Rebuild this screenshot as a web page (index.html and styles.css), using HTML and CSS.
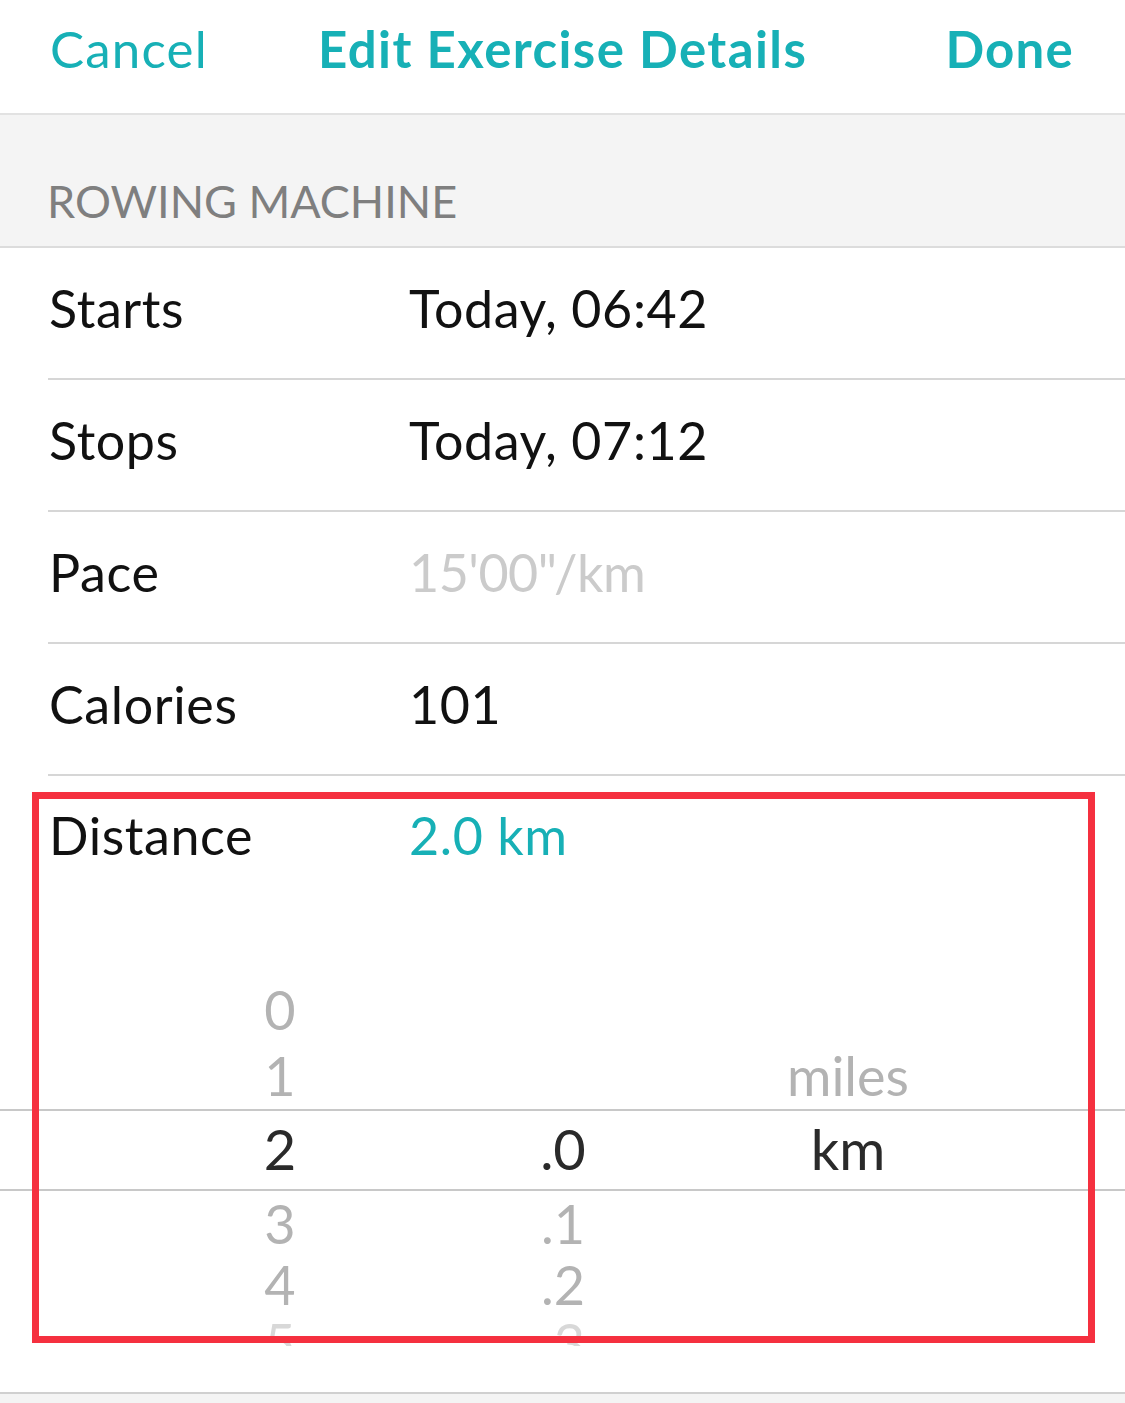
FILE: index.html
```html
<!DOCTYPE html>
<html lang="en">
<head>
  <meta charset="UTF-8">
  <meta name="viewport" content="width=device-width, initial-scale=1.0">
  <title>Edit Exercise Details</title>
  <link rel="stylesheet" href="styles.css">
</head>
<body>
  <div class="screen">
    <header class="nav">
      <span class="nav-btn">Cancel</span>
      <span class="nav-title">Edit Exercise Details</span>
      <span class="nav-btn nav-done">Done</span>
    </header>

    <div class="section-head">ROWING MACHINE</div>

    <ul class="rows">
      <li class="row"><span class="label">Starts</span><span class="value">Today, 06:42</span></li>
      <li class="row"><span class="label">Stops</span><span class="value">Today, 07:12</span></li>
      <li class="row"><span class="label">Pace</span><span class="value muted">15'00"/km</span></li>
      <li class="row"><span class="label">Calories</span><span class="value">101</span></li>
      <li class="row row-open"><span class="label">Distance</span><span class="value accent">2.0 km</span></li>
    </ul>

    <div class="picker">
      <div class="pick-row r0"><span class="cell">0</span><span class="cell"></span><span class="cell"></span></div>
      <div class="pick-row r1"><span class="cell">1</span><span class="cell"></span><span class="cell">miles</span></div>
      <div class="pick-row selected"><span class="cell">2</span><span class="cell">.0</span><span class="cell">km</span></div>
      <div class="pick-row r3"><span class="cell">3</span><span class="cell">.1</span><span class="cell"></span></div>
      <div class="pick-row r4"><span class="cell">4</span><span class="cell">.2</span><span class="cell"></span></div>
      <div class="pick-row faint"><span class="cell">5</span><span class="cell">.3</span><span class="cell"></span></div>
    </div>

    <div class="footer"></div>

    <div class="highlight"></div>
  </div>
</body>
</html>
```

FILE: styles.css
```css
:root {
  --teal: #17b0b6;
  --text: #111;
  --line: #d6d6d6;
  --gray-bg: #f4f4f4;
}

* {
  box-sizing: border-box;
  margin: 0;
  padding: 0;
}

body {
  font-family: Lato, "Liberation Sans", sans-serif;
  background: #fff;
  color: var(--text);
}

.screen {
  position: relative;
  width: 1125px;
  height: 1403px;
  overflow: hidden;
}

/* top bar */
.nav {
  height: 115px;
  display: flex;
  align-items: center;
  padding: 0 51px 16px 50px;
  border-bottom: 2px solid #e2e2e2;
  color: var(--teal);
  font-size: 51px;
  letter-spacing: 1.2px;
}

.nav-title {
  margin-left: 110px;
  font-weight: 700;
  letter-spacing: 1.4px;
}

.nav-done {
  margin-left: auto;
  font-weight: 700;
}

.section-head {
  height: 133px;
  background: var(--gray-bg);
  border-bottom: 2px solid #dcdcdc;
  padding: 59px 0 0 47px;
  font-size: 45px;
  color: #7f7f7f;
}

/* detail rows */
.rows {
  list-style: none;
  padding-left: 48px;
}

.row {
  height: 132px;
  display: flex;
  align-items: center;
  border-bottom: 2px solid var(--line);
  font-size: 52px;
  letter-spacing: 0.6px;
  padding-bottom: 10px;
}

.row-open {
  border-bottom: none;
  align-items: flex-start;
  padding-top: 28px;
  height: 200px;
}

.label {
  width: 361px;
  padding-left: 1px;
}

.value.muted {
  color: #cbcbcb;
  letter-spacing: -0.5px;
}

.value.accent {
  color: var(--teal);
}

/* distance picker */
.picker {
  height: 370px;
  overflow: hidden;
  font-size: 54px;
  color: #b3b3b3;
}

.pick-row {
  display: grid;
  grid-template-columns: 300px 266px 304px;
  padding-left: 130px;
  align-items: center;
}

.pick-row .cell {
  text-align: center;
}

.r0 { height: 66px; }
.r1 { height: 67px; }
.r3 { height: 61px; }
.r4 { height: 64px; }

.pick-row.selected {
  height: 82px;
  border-top: 2px solid #c8c8c8;
  border-bottom: 2px solid #c8c8c8;
  color: #2a2a2a;
  font-size: 56px;
  padding-bottom: 4px;
}

.pick-row.faint {
  color: #d8d8d8;
  align-items: start;
  height: 60px;
  line-height: 1;
}

.footer {
  border-top: 2px solid #d0d0d0;
  background: var(--gray-bg);
  height: 60px;
  margin-top: 46px;
}

/* annotation frame */
.highlight {
  position: absolute;
  left: 32px;
  top: 792px;
  width: 1063px;
  height: 551px;
  border: 7px solid #f5303f;
  pointer-events: none;
}
```
